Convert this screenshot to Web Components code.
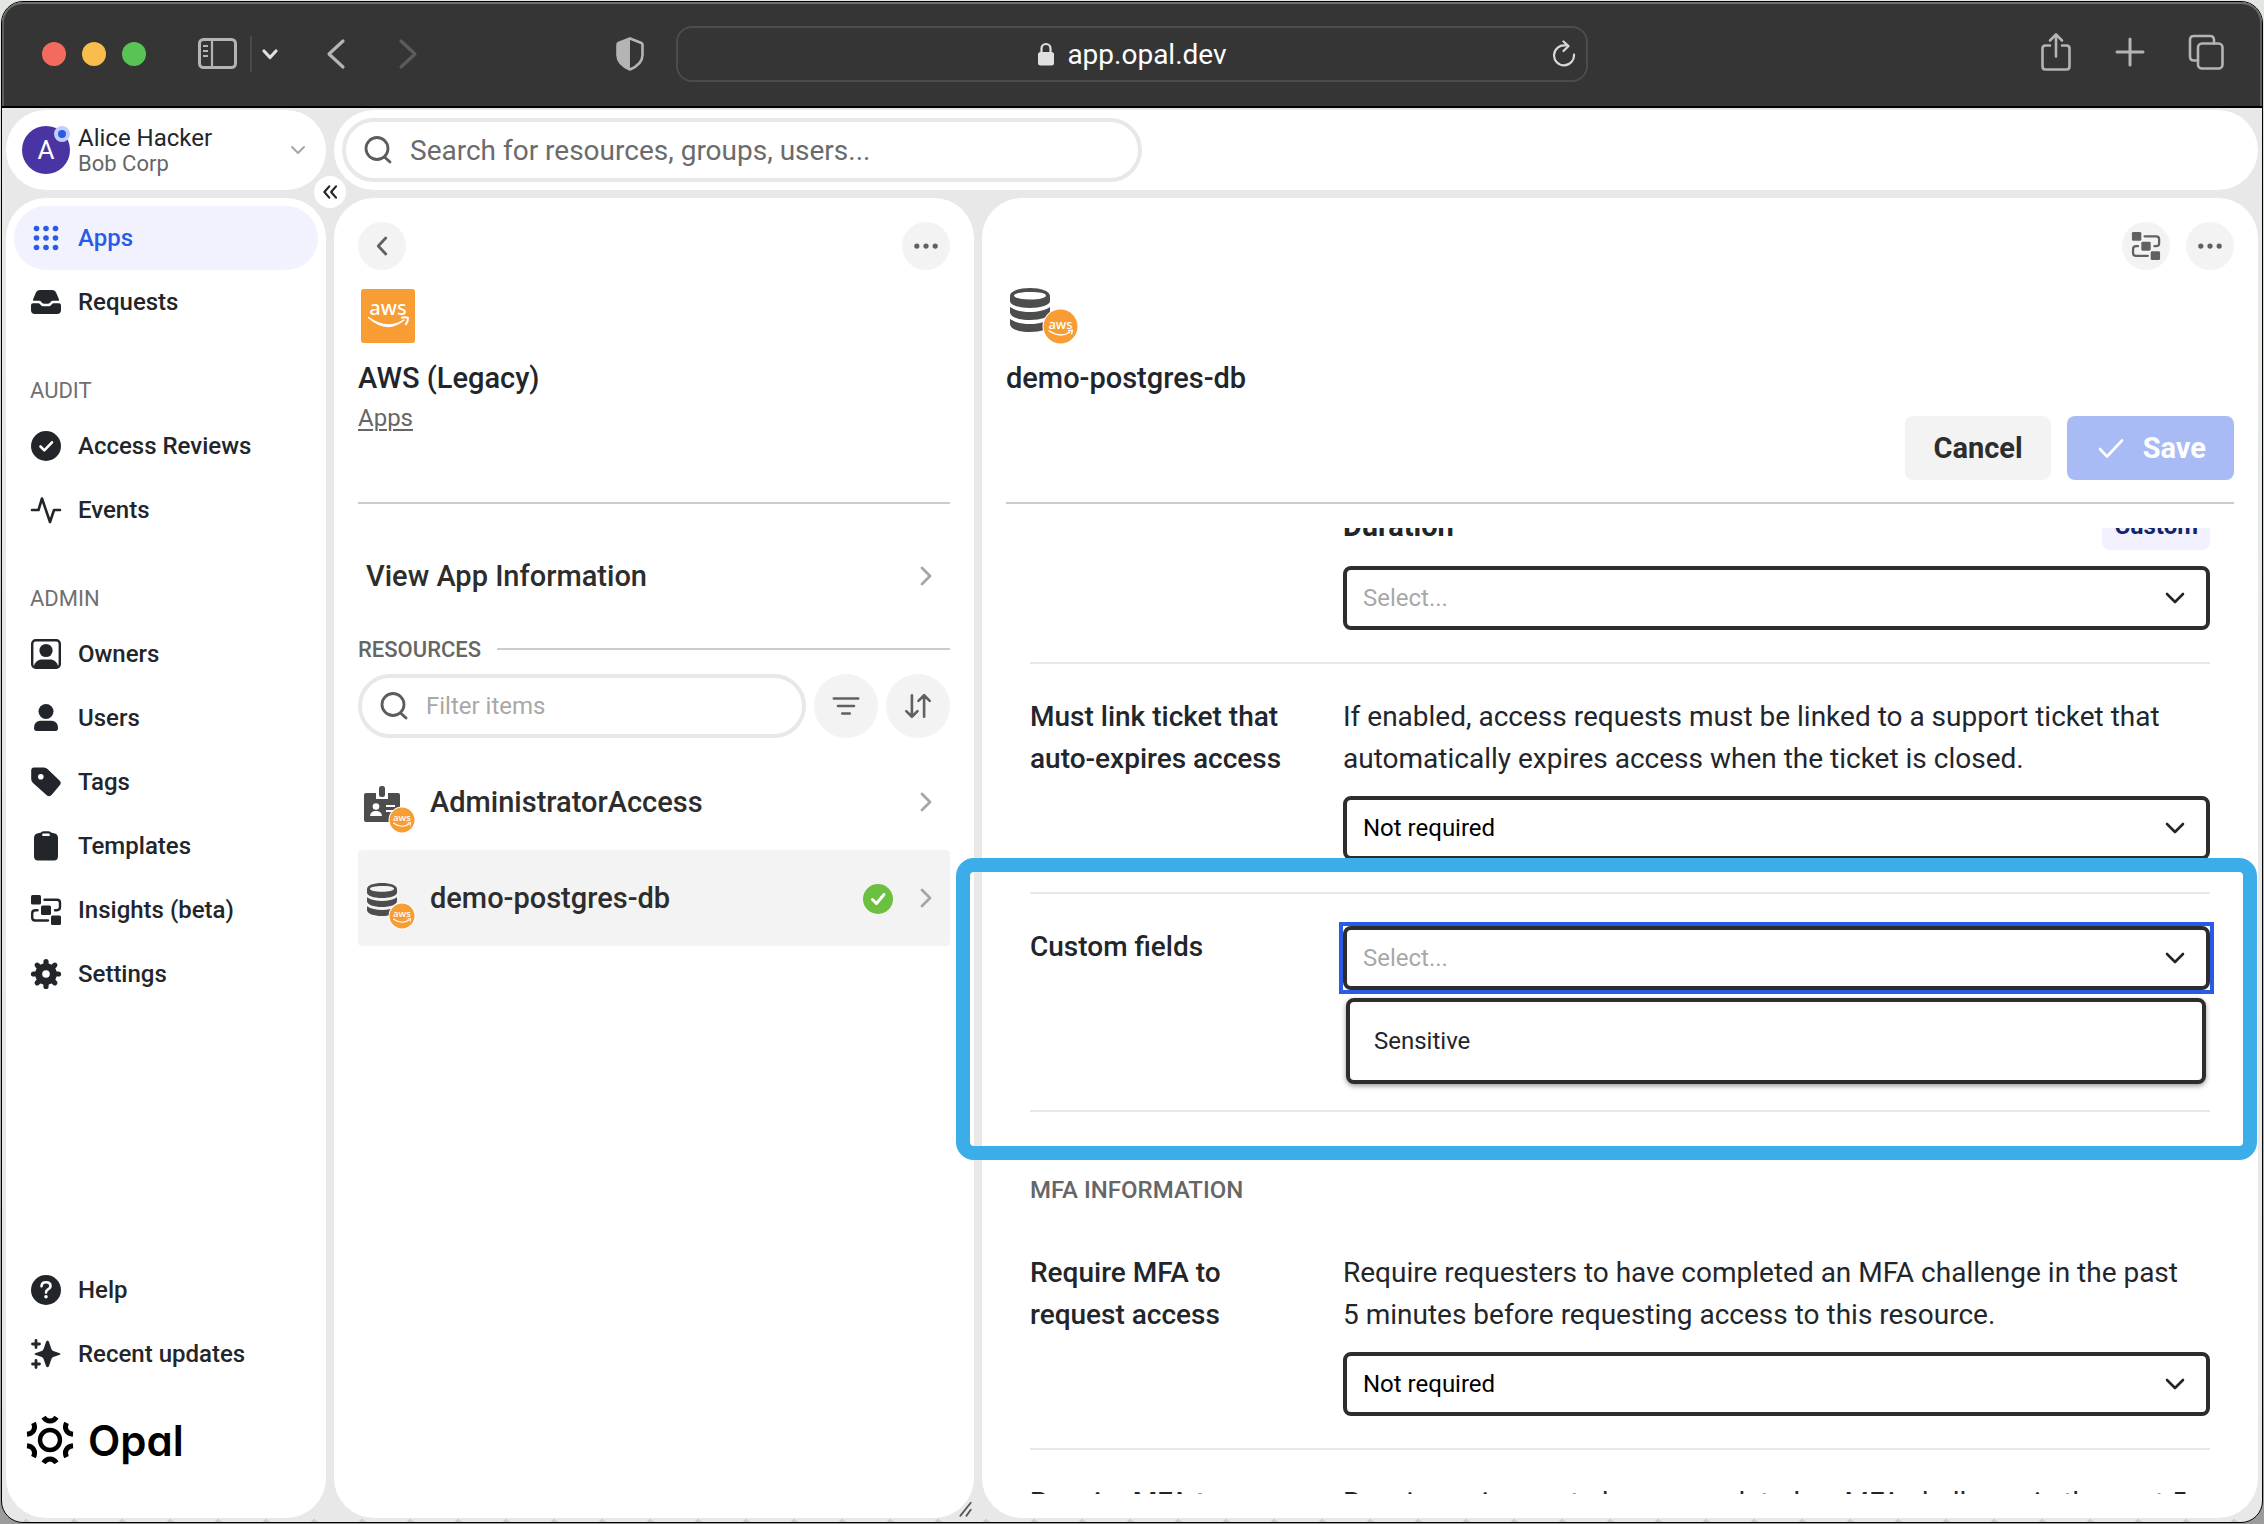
<!DOCTYPE html>
<html lang="en">
<head>
<meta charset="utf-8">
<title>Opal – demo-postgres-db</title>
<style>
  html, body { height: 100%; }
  body {
    margin: 0; padding: 1px; box-sizing: border-box; overflow: hidden;
    background: linear-gradient(#e2e7e1, #9b9b9b);
    font-family: Roboto, "Liberation Sans", sans-serif;
    font-size: 28px; color: #22262b;
  }
</style>
</head>
<body>
<browser-window url="app.opal.dev">
  <opal-shell>
    <user-card slot="user" name="Alice Hacker" org="Bob Corp" initial="A"></user-card>

    <search-field slot="search" label="Search" placeholder="Search for resources, groups, users..."></search-field>

    <side-nav slot="nav">
      <nav-item icon="apps" current>Apps</nav-item>
      <nav-item icon="inbox">Requests</nav-item>
      <nav-heading>AUDIT</nav-heading>
      <nav-item icon="check-circle">Access Reviews</nav-item>
      <nav-item icon="activity">Events</nav-item>
      <nav-heading>ADMIN</nav-heading>
      <nav-item icon="owner">Owners</nav-item>
      <nav-item icon="user">Users</nav-item>
      <nav-item icon="tag">Tags</nav-item>
      <nav-item icon="clipboard">Templates</nav-item>
      <nav-item icon="graph">Insights (beta)</nav-item>
      <nav-item icon="gear">Settings</nav-item>
      <nav-item slot="foot" icon="help">Help</nav-item>
      <nav-item slot="foot" icon="sparkle">Recent updates</nav-item>
      <opal-logo slot="foot"></opal-logo>
    </side-nav>

    <content-panel slot="list" heading="AWS (Legacy)">
      <round-button slot="start" icon="left" label="Back"></round-button>
      <round-button slot="end" icon="dots" label="More"></round-button>
      <ui-icon slot="icon" name="aws" style="--w:64px;--h:64px"></ui-icon>
      <bread-crumb slot="foot">Apps</bread-crumb>
      <resource-list></resource-list>
    </content-panel>

    <content-panel slot="detail" heading="demo-postgres-db">
      <round-button slot="end" icon="graph" label="Graph"></round-button>
      <round-button slot="end" icon="dots" label="More"></round-button>
      <ui-icon slot="icon" name="db-large" style="--w:76px;--h:64px"></ui-icon>
      <form-actions slot="foot"></form-actions>
      <settings-form></settings-form>
      <focus-frame slot="overlay"></focus-frame>
    </content-panel>
  </opal-shell>
</browser-window>

<script>
const awsBadge = (x, y, r) => `
  <circle cx="${x}" cy="${y}" r="${r + 1}" fill="#fff"/>
  <circle cx="${x}" cy="${y}" r="${r}" fill="#f79d33"/>
  <g transform="translate(${x} ${y}) scale(${r / 17})">
    <text x="0" y="2" text-anchor="middle" font-family="Noto Sans, sans-serif" font-size="13" font-weight="500" fill="#fff">aws</text>
    <path d="M-12 4Q0 12 9.500 5.500" fill="none" stroke="#fff" stroke-width="1.500"/>
    <path d="M7.500 4.200l4.300-.4-.8 4" fill="none" stroke="#fff" stroke-width="1.400"/>
  </g>`;
const database = `
  <path fill-rule="evenodd" d="M0 8C0 3 9 0 20 0S40 3 40 8V13C40 17 31 20 20 20S0 17 0 13ZM4 7.500C4 10 11 11.500 20 11.500S36 10 36 7.500 29 4 20 4 4 5.500 4 7.500Z"/>
  <path d="M0 19C5 22.500 12 24 20 24S35 22.500 40 19V24C40 29 31 32 20 32S0 29 0 24Z"/>
  <path d="M0 31C5 34.500 12 36 20 36S35 34.500 40 31V36C40 41 31 44 20 44S0 41 0 36Z"/>`;
const line = (d, w = 3) => `<path d="${d}" fill="none" stroke="currentColor" stroke-width="${w}" stroke-linecap="round" stroke-linejoin="round"/>`;
const fill = d => `<path d="${d}" fill="currentColor" fill-rule="evenodd"/>`;

const ICONS = {
  apps: `<g fill="currentColor">${[6.5, 16, 25.5].map(y => [6.5, 16, 25.5].map(x => `<circle cx="${x}" cy="${y}" r="2.800"/>`).join('')).join('')}</g>`,
  inbox: fill('M10 4H22C24 4 25.500 5 26.300 7L29 13.500Q29.500 14.800 28 14.800H22.500C20.500 14.800 20.500 17.800 18 17.800H14C11.500 17.800 11.500 14.800 9.500 14.800H4Q2.500 14.800 3 13.500L5.700 7C6.500 5 8 4 10 4Z') +
         fill('M3 17.300H8.500C10.500 17.300 10.500 20.300 13 20.300H19C21.500 20.300 21.500 17.300 23.500 17.300H29Q31 17.300 31 19V24Q31 28 27 28H5Q1 28 1 24V19Q1 17.300 3 17.300Z'),
  'check-circle': '<circle cx="16" cy="16" r="15" fill="currentColor"/><path d="M10.500 16.500l3.800 3.800 7.700-8" fill="none" stroke="#fff" stroke-width="2.600" stroke-linecap="round" stroke-linejoin="round"/>',
  activity: line('M2 16H8.500L12 4.500L20 28L24 16H30', 2.6),
  owner: '<rect x="2.200" y="2.200" width="27.600" height="27.600" rx="3.500" fill="none" stroke="currentColor" stroke-width="2.400"/><circle cx="16" cy="12.500" r="6.600" fill="currentColor"/>' + fill('M4 30V28C5 24 8 21.500 12 21.500H20C24 21.500 27 24 28 28V30Z'),
  user: '<circle cx="16" cy="9.500" r="7.500" fill="currentColor"/>' + fill('M10 18.800H22Q28 19.500 28 26Q28 29 25.500 29H6.500Q4 29 4 26Q4 19.500 10 18.800Z'),
  tag: fill('M4 1.500H14Q16 1.500 17.500 3L29.500 14.500Q32 17 29.500 19.500L22 28.500Q19.500 31.500 17 29.500L3 17Q1.200 15.300 1.200 13V4.500Q1.200 1.500 4 1.500ZM10.800 8A2.800 2.800 0 1 0 10.800 13.600 2.800 2.800 0 1 0 10.800 8Z'),
  clipboard: fill('M11 2.500Q12 1.200 14 1.200H18Q20 1.200 21 2.500L24 3.200Q28 4 28 8V26Q28 30.500 24 30.500H8Q4 30.500 4 26V8Q4 4 8 3.200ZM13 3.600Q12.300 3.600 12.300 4.500V6H19.700V4.500Q19.700 3.600 19 3.600Z'),
  graph: '<g fill="currentColor"><rect x="1" y="1" width="10" height="9.500" rx="1.500"/><rect x="11" y="11.500" width="10" height="9.500" rx="1.500"/><rect x="21" y="21.500" width="10" height="9.500" rx="1.500"/></g>' +
         line('M14.500 5.700H27Q30 5.700 30 8.700V13Q30 16.200 26.800 16.200H25M7.500 16.200H5.500Q2.200 16.200 2.200 19.200V23.500Q2.200 26.500 5.200 26.500H18', 2.4),
  gear: `<g fill="none" stroke="currentColor"><circle cx="16" cy="16" r="7.300" stroke-width="7"/>${[0, 45, 90, 135, 180, 225, 270, 315].map(a => `<path d="M16 7V3.500" stroke-width="5.200" stroke-linecap="round" transform="rotate(${a} 16 16)"/>`).join('')}</g>`,
  help: '<circle cx="16" cy="16" r="15" fill="currentColor"/><path d="M11.500 12.300Q11.700 8.200 16 8.200Q20.500 8.200 20.500 12Q20.500 14 18 15.300Q16 16.400 16 18.600" fill="none" stroke="#fff" stroke-width="2.600" stroke-linecap="round"/><circle cx="16" cy="22.800" r="1.800" fill="#fff"/>',
  sparkle: fill('M17.500 2.500Q18.500 2.500 19 4L21.500 11.200Q22 12.500 23.300 13L29.800 15.200Q31.500 16 29.800 16.800L23.300 19Q22 19.500 21.500 20.800L19 28Q17.500 30.500 16 28L13.500 20.800Q13 19.500 11.700 19L5.200 16.800Q3.500 16 5.200 15.200L11.700 13Q13 12.500 13.500 11.200L16 4Q16.500 2.500 17.500 2.500Z') +
           line('M6 2.500V9.500M2.500 6H9.500M6 22.500V29.500M2.500 26H9.500', 2.8),
  search: line('M15 3.500A11 11 0 1 1 15 25.500 11 11 0 1 1 15 3.500M22.500 23L28 28', 2.8),
  filter: line('M3 8H29M7.500 16H24.500M12 24H20', 2.8),
  sort: line('M9.500 4.500V27.500M3.500 21.500L9.500 27.500L15.500 21.500M22.500 27.500V4.500M16.500 10.500L22.500 4.500L28.500 10.500', 2.8),
  left: line('M20 7.500L12 16L20 24.500', 3),
  right: line('M12 8L20 16L12 24', 2.8),
  down: line('M8 12L16 20L24 12', 2.6),
  collapse: line('M15 8.500L8.500 16L15 23.500M24 8.500L17.500 16L24 23.500', 3),
  dots: '<g fill="currentColor"><circle cx="6.200" cy="16" r="2.800"/><circle cx="16" cy="16" r="2.800"/><circle cx="25.800" cy="16" r="2.800"/></g>',
  check: line('M5 17L12 24.500L27 8.500', 2.6),
  ok: '<circle cx="16" cy="17" r="15" fill="#6bc03f"/><path d="M10.500 17.500l4 4 7.500-9" fill="none" stroke="#fff" stroke-width="3" stroke-linecap="round" stroke-linejoin="round"/>',
  aws: ['0 0 64 64', `<rect x="3" y="5" width="54" height="54" rx="3" fill="#f79d33"/>
        <text x="30" y="31" text-anchor="middle" font-family="Noto Sans, sans-serif" font-size="20" font-weight="500" fill="#fff">aws</text>
        <path d="M10.500 33.500Q29 47 46 36Q29 50 10.500 33.500Z" fill="#fff" stroke="#fff" stroke-width="1.400" stroke-linejoin="round"/>
        <path d="M43 33.800Q48 32.500 50 34Q50 38 47.500 41" fill="none" stroke="#fff" stroke-width="2"/>`],
  'db-large': ['0 0 76 64', `<g transform="translate(4 4)" fill="#4d4d4d">${database}</g>${awsBadge(54.5, 42.500, 17)}`],
  db: ['0 0 64 64', `<g transform="translate(9 17) scale(.75)" fill="#4d4d4d">${database}</g>${awsBadge(44, 50, 12.5)}`],
  badge: ['0 0 64 64', `<path d="M8 23H18V29H30V23H40Q42 23 42 25V50Q42 52 40 52H8Q6 52 6 50V25Q6 23 8 23Z" fill="#4d4d4d"/>
        <rect x="21" y="16" width="6" height="11" rx="2.500" fill="#4d4d4d"/>
        <circle cx="18" cy="36.500" r="3.300" fill="#fff"/><path d="M12 46Q12.500 41 18 41T24 46Z" fill="#fff"/>
        <path d="M28 36H37M28 41H36" stroke="#fff" stroke-width="2"/>${awsBadge(44, 50, 12.5)}`],
  logo: ['-24 -24 48 48', `<g fill="none" stroke="#000"><circle r="10" stroke-width="4.400"/>${[0, 60, 120, 180, 240, 300].map(a => `<path d="M-6.500 -22.800C-3 -17.600 3 -17.600 6.500 -22.800" stroke-width="5" transform="rotate(${a})"/>`).join('')}</g>`],
  sidebar: ['0 0 40 32', '<rect x="1.500" y="1.500" width="36" height="28" rx="4" fill="none" stroke="#b4b4b4" stroke-width="3"/><path d="M14 3V29M5 8H10M5 13H10M5 18H10" fill="none" stroke="#b4b4b4" stroke-width="2.200"/>'],
  caret: line('M10 13L16 19.500L22 13', 3.2),
  back: line('M23 3L9 16L23 29', 3.2),
  forward: line('M9 3L23 16L9 29', 3.2),
  shield: ['0 0 32 36', '<path d="M16 2.500L27.500 7Q28.500 7.500 28.500 9V19C28.500 26 23 30.500 16 33.500C9 30.500 3.500 26 3.500 19V9Q3.500 7.500 4.500 7Z" fill="none" stroke="#b4b4b4" stroke-width="2.600" stroke-linejoin="round"/><path d="M16 2.500L4.500 7Q3.500 7.500 3.500 9V19C3.500 26 9 30.500 16 33.500Z" fill="#b4b4b4"/>'],
  lock: ['0 0 18 24', '<rect x="1" y="10" width="16" height="13.500" rx="2.500" fill="#e0e0e0"/><path d="M4.500 11V6.500a4.500 4.500 0 0 1 9 0V11" fill="none" stroke="#e0e0e0" stroke-width="2.200"/>'],
  reload: ['0 0 24 28', '<path d="M13.500 5.500A10 10 0 1 0 22 14.500M11.500 1.500L16.500 6L11.500 11" fill="none" stroke="#d8d8d8" stroke-width="2.200" stroke-linecap="round" stroke-linejoin="round"/>'],
  share: ['0 0 32 40', line('M10 13.500H5.500Q2.500 13.500 2.500 16.500V34.500Q2.500 37.500 5.500 37.500H26.500Q29.500 37.500 29.500 34.500V16.500Q29.500 13.500 26.500 13.500H22M16 24.500V3M10 8.500L16 2.500L22 8.500', 2.6)],
  plus: line('M16 3V29M3 16H29', 3),
  tabs: ['0 0 36 36', line('M10 26.500H6Q2 26.500 2 22.500V6Q2 2 6 2H22Q26 2 26 6V9.500', 2.6) + '<rect x="10" y="9.500" width="24.500" height="25" rx="4" fill="none" stroke="currentColor" stroke-width="2.600"/>'],
  grip: line('M14 25L26 10M21 25L26 18', 2)
};

/* Base class: renders the subclass's template into an open shadow root. */
class View extends HTMLElement {
  connectedCallback() {
    if (this.shadowRoot) return;
    this.attachShadow({ mode: 'open' }).innerHTML = '<style>*{box-sizing:border-box}</style>' + this.render();
  }
  attr(name) { return this.getAttribute(name) || ''; }
}
const define = (name, render) => customElements.define(name, class extends View { render() { return render(this); } });

define('ui-icon', el => {
  const icon = ICONS[el.attr('name')];
  const [box, body] = Array.isArray(icon) ? icon : ['0 0 32 32', icon];
  return `<style>
    :host{display:block;flex:none;width:var(--w,32px);height:var(--h,32px)}
    svg{display:block;width:100%;height:100%}
  </style><svg viewBox="${box}" aria-hidden="true">${body}</svg>`;
});

define('browser-window', el => `<style>
    :host{display:flex;flex-direction:column;height:100%;box-sizing:border-box;border:1px solid #000;border-radius:22px;overflow:hidden;background:#e8e8e8}
    header{flex:none;display:grid;grid-template-columns:1fr minmax(0,912px) 1fr;align-items:center;height:106px;background:#353535;border-bottom:2px solid #000;box-shadow:inset 0 2px #6f6f6f,inset 2px 0 #5c5c5c,inset -2px 0 #5c5c5c;border-radius:21px 21px 0 0;color:#b4b4b4}
    .left,.right{display:flex;align-items:center}
    .left{padding:0 30px 0 40px}
    .right{justify-content:flex-end;padding:0 38px 4px 0;gap:42px}
    .lights{display:flex;gap:16px;margin-right:52px}
    .lights i{width:24px;height:24px;border-radius:50%}
    button{display:block;padding:0;border:0;background:none;color:inherit}
    .rule{width:2px;height:36px;margin:0 2px 0 12px;background:#4a4a4a}
    .push{margin-left:auto}
    .url{display:grid;grid-template-columns:1fr auto 1fr;align-items:center;height:56px;padding:0 10px;border:2px solid #4c4c4c;border-radius:16px;color:#fff;font-size:28px}
    .addr{grid-column:2;display:flex;align-items:center;gap:12px}
    .url button{justify-self:end}
  </style>
  <header>
    <div class="left">
      <div class="lights"><i style="background:#f46a5e"></i><i style="background:#f9bd4e"></i><i style="background:#58c454"></i></div>
      <button aria-label="Sidebar"><ui-icon name="sidebar" style="--w:40px;--h:32px"></ui-icon></button>
      <span class="rule"></span>
      <button aria-label="Tab groups" style="color:#e0e0e0"><ui-icon name="caret"></ui-icon></button>
      <button aria-label="Back" style="margin-left:34px"><ui-icon name="back"></ui-icon></button>
      <button aria-label="Forward" style="margin-left:40px;color:#5c5c5c"><ui-icon name="forward"></ui-icon></button>
      <button aria-label="Privacy report" class="push"><ui-icon name="shield" style="--h:36px"></ui-icon></button>
    </div>
    <div class="url">
      <span class="addr"><ui-icon name="lock" style="--w:18px;--h:24px"></ui-icon><span>${el.attr('url')}</span></span>
      <button aria-label="Reload"><ui-icon name="reload" style="--w:24px;--h:28px"></ui-icon></button>
    </div>
    <div class="right">
      <button aria-label="Share"><ui-icon name="share" style="--h:40px"></ui-icon></button>
      <button aria-label="New tab"><ui-icon name="plus"></ui-icon></button>
      <button aria-label="Tabs"><ui-icon name="tabs" style="--w:36px;--h:36px"></ui-icon></button>
    </div>
  </header>
  <slot></slot>`);

define('opal-shell', () => `<style>
    :host{position:relative;flex:1;min-height:0;display:grid;grid-template-columns:320px 640px minmax(0,1fr);grid-template-rows:80px minmax(0,1fr);gap:8px;padding:2px 4px 4px;
      background:conic-gradient(from 135deg at 50% 0,#cdcdcd 90deg,transparent 0) 0 100%/48px 4px repeat-x}
    .user,.top{background:#fff;border-radius:40px}
    .user{position:relative}
    .top{grid-column:2/4;padding:8px}
    .top ::slotted(*){width:800px;max-width:100%;--hint:#6b6b6b;--text:28px}
    .collapse{position:absolute;right:-20px;bottom:-18px;display:grid;place-items:center;width:32px;height:32px;padding:0;border:0;border-radius:50%;background:#fff;color:#22262b}
    .grip{position:absolute;left:946px;bottom:0;color:#555}
  </style>
  <div class="user"><slot name="user"></slot><button class="collapse" aria-label="Collapse sidebar"><ui-icon name="collapse" style="--w:24px;--h:24px"></ui-icon></button></div>
  <div class="top"><slot name="search"></slot></div>
  <slot name="nav"></slot><slot name="list"></slot><slot name="detail"></slot>
  <ui-icon class="grip" name="grip" style="--w:28px;--h:28px"></ui-icon>`);

define('user-card', el => `<style>
    :host{display:flex;align-items:center;gap:8px;height:80px;padding:0 16px;box-sizing:border-box;font-size:24px;line-height:26px}
    .avatar{position:relative;display:grid;place-items:center;width:48px;height:48px;border-radius:50%;background:#4a34a3;color:#fff;font-size:26px}
    .dot{position:absolute;right:0;top:0;width:16px;height:16px;border-radius:50%;background:#2a5be8;border:4px solid #c3cff8}
    .who{flex:1;padding-top:2px}
    .org{color:#666;font-size:22px}
    ui-icon{color:#a6a6a6}
  </style>
  <span class="avatar">${el.attr('initial')}<span class="dot"></span></span>
  <div class="who"><div>${el.attr('name')}</div><div class="org">${el.attr('org')}</div></div>
  <ui-icon name="down" style="--w:24px;--h:24px"></ui-icon>`);

define('search-field', el => `<style>
    :host{display:block}
    label{display:flex;align-items:center;gap:16px;height:64px;padding:0 16px;border:4px solid #e8e8e8;border-radius:32px;background:#fff;color:#5c5c5c}
    input{flex:1;min-width:0;padding:0;border:0;outline:0;background:none;font:inherit;font-size:var(--text,24px);color:#22262b}
    input::placeholder{color:var(--hint,#a8a8a8);opacity:1}
  </style>
  <label><ui-icon name="search"></ui-icon><input type="text" aria-label="${el.attr('label')}" placeholder="${el.attr('placeholder')}"></label>`);

define('side-nav', () => `<style>
    :host{display:flex;flex-direction:column;min-height:0;padding:8px 8px 54px;box-sizing:border-box;border-radius:40px;background:#fff;font-size:24px;font-weight:500}
    nav{flex:1}
  </style><nav><slot></slot></nav><slot name="foot"></slot>`);

define('nav-heading', () => `<style>
    :host{display:block;padding:45px 16px 11px;line-height:24px;font-size:22px;font-weight:400;color:#707070}
  </style><slot></slot>`);

define('nav-item', el => `<style>
    :host{display:block}
    a{display:flex;align-items:center;gap:16px;height:64px;padding:0 16px;border-radius:32px;color:inherit;text-decoration:none}
    :host([current]) a{background:#f1f2fd;color:#2a5be8}
  </style><a href="#"><ui-icon name="${el.attr('icon')}"></ui-icon><span><slot></slot></span></a>`);

define('opal-logo', () => `<style>
    :host{display:flex;align-items:center;gap:14px;height:48px;margin-top:30px;padding-left:12px;color:#000;font-family:Inter,sans-serif;font-size:42px;font-weight:600;font-feature-settings:"cv11"}
  </style><ui-icon name="logo" style="--w:48px;--h:48px"></ui-icon><span>Opal</span>`);

define('round-button', el => `<style>
    :host{display:block;--d:48px}
    :host([large]){--d:64px}
    button{display:grid;place-items:center;width:var(--d);height:var(--d);padding:0;border:0;border-radius:50%;background:#f3f3f3;color:#616161}
  </style><button aria-label="${el.attr('label')}"><ui-icon name="${el.attr('icon')}" style="--w:30px;--h:30px"></ui-icon></button>`);

define('content-panel', el => `<style>
    :host{position:relative;display:flex;flex-direction:column;min-width:0;min-height:0;padding:24px;box-sizing:border-box;border-radius:40px;background:#fff}
    header{flex:none;border-bottom:2px solid #ccc}
    .bar{display:flex;gap:16px;height:48px}
    .bar span{flex:1}
    .icon{height:64px;margin-top:14px}
    h2{margin:10px 0 0;font-size:29px;font-weight:500;line-height:40px}
    .foot{height:104px}
    .body{flex:1;min-height:0;display:flex;flex-direction:column;margin-top:24px}
  </style>
  <header>
    <div class="bar"><slot name="start"></slot><span></span><slot name="end"></slot></div>
    <div class="icon"><slot name="icon"></slot></div>
    <h2>${el.attr('heading')}</h2>
    <div class="foot"><slot name="foot"></slot></div>
  </header>
  <div class="body"><slot></slot></div>
  <slot name="overlay"></slot>`);

define('bread-crumb', () => `<style>
    :host{display:block;font-size:24px;line-height:40px}
    a{color:#666;text-decoration-thickness:2px;text-underline-offset:3px}
  </style><a href="#"><slot></slot></a>`);

define('resource-list', () => `<style>
    :host{display:block}
    .title{display:flex;align-items:center;gap:16px;height:50px;font-size:22px;font-weight:500;color:#666}
    .title h3{margin:0;font:inherit}
    .title::after{content:"";flex:1;height:2px;background:#ccc}
    .tools{display:flex;gap:8px;margin-bottom:16px}
    search-field{flex:1}
  </style>
  <resource-row plain>View App Information</resource-row>
  <div class="title"><h3>RESOURCES</h3></div>
  <div class="tools">
    <search-field label="Filter items" placeholder="Filter items"></search-field>
    <round-button large icon="filter" label="Filter"></round-button>
    <round-button large icon="sort" label="Sort"></round-button>
  </div>
  <resource-row icon="badge">AdministratorAccess</resource-row>
  <resource-row icon="db" selected>demo-postgres-db</resource-row>`);

define('resource-row', el => `<style>
    :host{display:block;font-size:29px;font-weight:500;color:#2d2d2d}
    a{display:flex;align-items:center;gap:8px;height:96px;padding:0 8px 0 0;border-radius:4px;color:inherit;text-decoration:none}
    :host([plain]) a{padding-left:8px}
    :host([selected]) a{background:#f3f3f3}
    .label{flex:1}
    .go{color:#a6a6a6}
  </style>
  <a href="#">${el.attr('icon') ? `<ui-icon name="${el.attr('icon')}" style="--w:64px;--h:64px"></ui-icon>` : ''}
  <span class="label"><slot></slot></span>
  ${el.hasAttribute('selected') ? '<ui-icon name="ok"></ui-icon><span></span>' : ''}<ui-icon class="go" name="right"></ui-icon></a>`);

define('form-actions', () => `<style>
    :host{display:flex;justify-content:flex-end;gap:16px;padding-top:18px}
    button{display:flex;align-items:center;gap:16px;height:64px;padding:0 28px;border:0;border-radius:8px;background:#f3f3f3;color:#2d2d2d;font:inherit;font-size:29px;font-weight:700}
    .save{background:#a9bbf4;color:#fff}
  </style>
  <button>Cancel</button><button class="save"><ui-icon name="check"></ui-icon>Save</button>`);

define('settings-form', () => `<style>
    :host{flex:1;min-height:0;display:block;overflow:hidden;padding:0 24px}
    .scrolled{margin-top:-26px}
    .caption{display:flex;align-items:center;justify-content:space-between;height:48px;margin-bottom:16px;font-size:29px;font-weight:700}
    .pill{padding:0 12px;border-radius:8px;background:#f1f2fd;color:#14246b;font-size:24px;line-height:48px}
    h3{margin:64px 0 16px;font-size:24px;font-weight:500;line-height:28px;color:#666}
  </style>
  <div class="scrolled">
    <field-row class="first">
      <div class="caption"><span>Duration</span><span class="pill">Custom</span></div>
      <select-field label="Duration" value="Select..." empty></select-field>
    </field-row>
    <field-row label="Must link ticket that auto-expires access" hint="If enabled, access requests must be linked to a support ticket that automatically expires access when the ticket is closed.">
      <select-field label="Must link ticket that auto-expires access" value="Not required"></select-field>
    </field-row>
    <field-row label="Custom fields" roomy>
      <select-field label="Custom fields" value="Select..." empty open option="Sensitive"></select-field>
    </field-row>
    <h3>MFA INFORMATION</h3>
    <field-row label="Require MFA to request access" hint="Require requesters to have completed an MFA challenge in the past 5 minutes before requesting access to this resource.">
      <select-field label="Require MFA to request access" value="Not required"></select-field>
    </field-row>
    <field-row label="Require MFA to approve requests" hint="Require reviewers to have completed an MFA challenge in the past 5 minutes before approving access to this resource.">
      <select-field label="Require MFA to approve requests" value="Not required"></select-field>
    </field-row>
  </div>`);

define('field-row', el => `<style>
    :host{display:grid;grid-template-columns:313px minmax(0,1fr);padding:32px 0;border-bottom:2px solid #e8e8e8;line-height:42px}
    :host(.first){padding-top:0}
    :host([roomy]) .value{min-height:152px}
    .label{padding-right:48px;font-weight:500}
    p{margin:0 0 16px;padding-right:16px}
  </style>
  <div class="label">${el.attr('label')}</div>
  <div class="value">${el.attr('hint') ? `<p>${el.attr('hint')}</p>` : ''}<slot></slot></div>`);

define('select-field', el => `<style>
    :host{display:block;position:relative;font-size:24px}
    .box{position:relative}
    :host([open]) .box{outline:4px solid #2a5be8}
    select{display:block;width:100%;height:64px;padding:0 16px;border:4px solid #2d2d2d;border-radius:8px;background:#fff;color:#000;font:inherit;appearance:none}
    :host([empty]) select{color:#a8a8a8}
    ui-icon{position:absolute;right:19px;top:16px;color:#22262b;pointer-events:none}
    ul{position:absolute;z-index:1;left:3px;right:4px;top:72px;margin:0;padding:0 24px;border:4px solid #2d2d2d;border-radius:8px;background:#fff;list-style:none;line-height:78px;box-shadow:0 2px 5px rgba(0,0,0,.4)}
  </style>
  <div class="box"><select aria-label="${el.attr('label')}"><option>${el.attr('value')}</option></select><ui-icon name="down"></ui-icon></div>
  ${el.hasAttribute('open') ? `<ul role="listbox" aria-label="${el.attr('label')}"><li role="option">${el.attr('option')}</li></ul>` : ''}`);

define('focus-frame', () => `<style>
    :host{position:absolute;z-index:2;left:-26px;right:1px;top:660px;height:302px;box-sizing:border-box;border:14px solid #3baeea;border-radius:18px;pointer-events:none}
  </style>`);
</script>
</body>
</html>
